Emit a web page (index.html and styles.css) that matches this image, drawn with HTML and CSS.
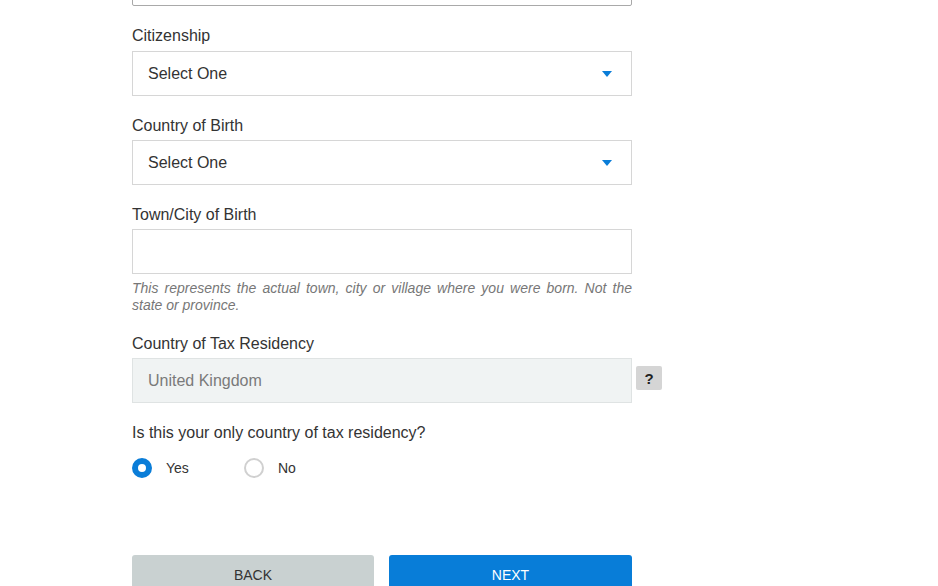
FILE: index.html
```html
<!DOCTYPE html>
<html>
<head>
<meta charset="utf-8">
<link rel="stylesheet" href="styles.css">
</head>
<body>
<div class="form">
  <div class="top-input"></div>

  <div class="field first">
    <div class="label">Citizenship</div>
    <div class="select"><span>Select One</span><span class="caret"></span></div>
  </div>

  <div class="field">
    <div class="label">Country of Birth</div>
    <div class="select"><span>Select One</span><span class="caret"></span></div>
  </div>

  <div class="field">
    <div class="label">Town/City of Birth</div>
    <div class="input"></div>
    <p class="help">This represents the actual town, city or village where you were born. Not the state or province.</p>
  </div>

  <div class="field">
    <div class="label">Country of Tax Residency</div>
    <div class="row">
      <div class="input disabled">United Kingdom</div>
      <div class="qbtn">?</div>
    </div>
  </div>

  <div class="field">
    <div class="label">Is this your only country of tax residency?</div>
    <div class="radios">
      <label class="radio"><span class="dot on"></span><span>Yes</span></label>
      <label class="radio"><span class="dot"></span><span>No</span></label>
    </div>
  </div>

  <div class="buttons">
    <div class="btn back">BACK</div>
    <div class="btn next">NEXT</div>
  </div>
</div>
</body>
</html>
```

FILE: styles.css
```css
html, body {
  margin: 0;
  padding: 0;
  background: #fff;
  overflow: hidden;
}
body {
  font-family: "Liberation Sans", Arial, sans-serif;
  color: #333;
}
.form {
  margin-left: 132px;
  width: 500px;
  display: flex;
  flex-direction: column;
}
.top-input {
  margin-top: -40px;
  height: 46px;
  box-sizing: border-box;
  border: 1px solid #a9a9a9;
  border-radius: 2px;
}
.field {
  margin-top: 20px;
}
.label {
  font-size: 16px;
  line-height: 20px;
  margin-bottom: 4px;
  color: #333;
}
.field.first .label {
  margin-bottom: 5px;
}
.select, .input {
  box-sizing: border-box;
  height: 45px;
  border: 1px solid #d6d6d6;
  display: flex;
  align-items: center;
  justify-content: space-between;
  padding: 0 19px 0 15px;
  font-size: 16px;
  color: #333;
}
.caret {
  width: 0;
  height: 0;
  border-left: 5.5px solid transparent;
  border-right: 5.5px solid transparent;
  border-top: 6px solid #0a7dd8;
  margin-top: 1px;
}
.help {
  margin: 6px 0 0;
  font-size: 14px;
  line-height: 17px;
  font-style: italic;
  color: #777;
  text-align: justify;
}
.row {
  display: flex;
  align-items: flex-start;
  width: 530px;
}
.input.disabled {
  width: 500px;
  flex: none;
  background: #f0f3f3;
  border-color: #dfe3e3;
  color: #7a7a7a;
}
.qbtn {
  margin: 8px 0 0 4px;
  width: 26px;
  height: 24px;
  background: #d5d5d5;
  border-radius: 2px;
  display: flex;
  align-items: center;
  justify-content: center;
  font-weight: bold;
  font-size: 15px;
  color: #222;
}
.radios {
  display: flex;
  margin-top: 12px;
  height: 26px;
  align-items: center;
}
.radio {
  display: flex;
  align-items: center;
  width: 112px;
  font-size: 14px;
  color: #333;
}
.dot {
  box-sizing: border-box;
  width: 20px;
  height: 20px;
  border-radius: 50%;
  border: 2px solid #d0d0d0;
  margin-right: 14px;
  background: #fff;
}
.dot.on {
  border: 6px solid #0a7dd8;
}
.buttons {
  margin-top: 74px;
  display: flex;
  gap: 15px;
}
.btn {
  height: 40px;
  border-radius: 3px;
  display: flex;
  align-items: center;
  justify-content: center;
  font-size: 14px;
}
.back {
  flex: 0 0 242px;
  background: #c9d1d1;
  color: #333;
}
.next {
  flex: 1;
  background: #087dd8;
  color: #fff;
}
```
